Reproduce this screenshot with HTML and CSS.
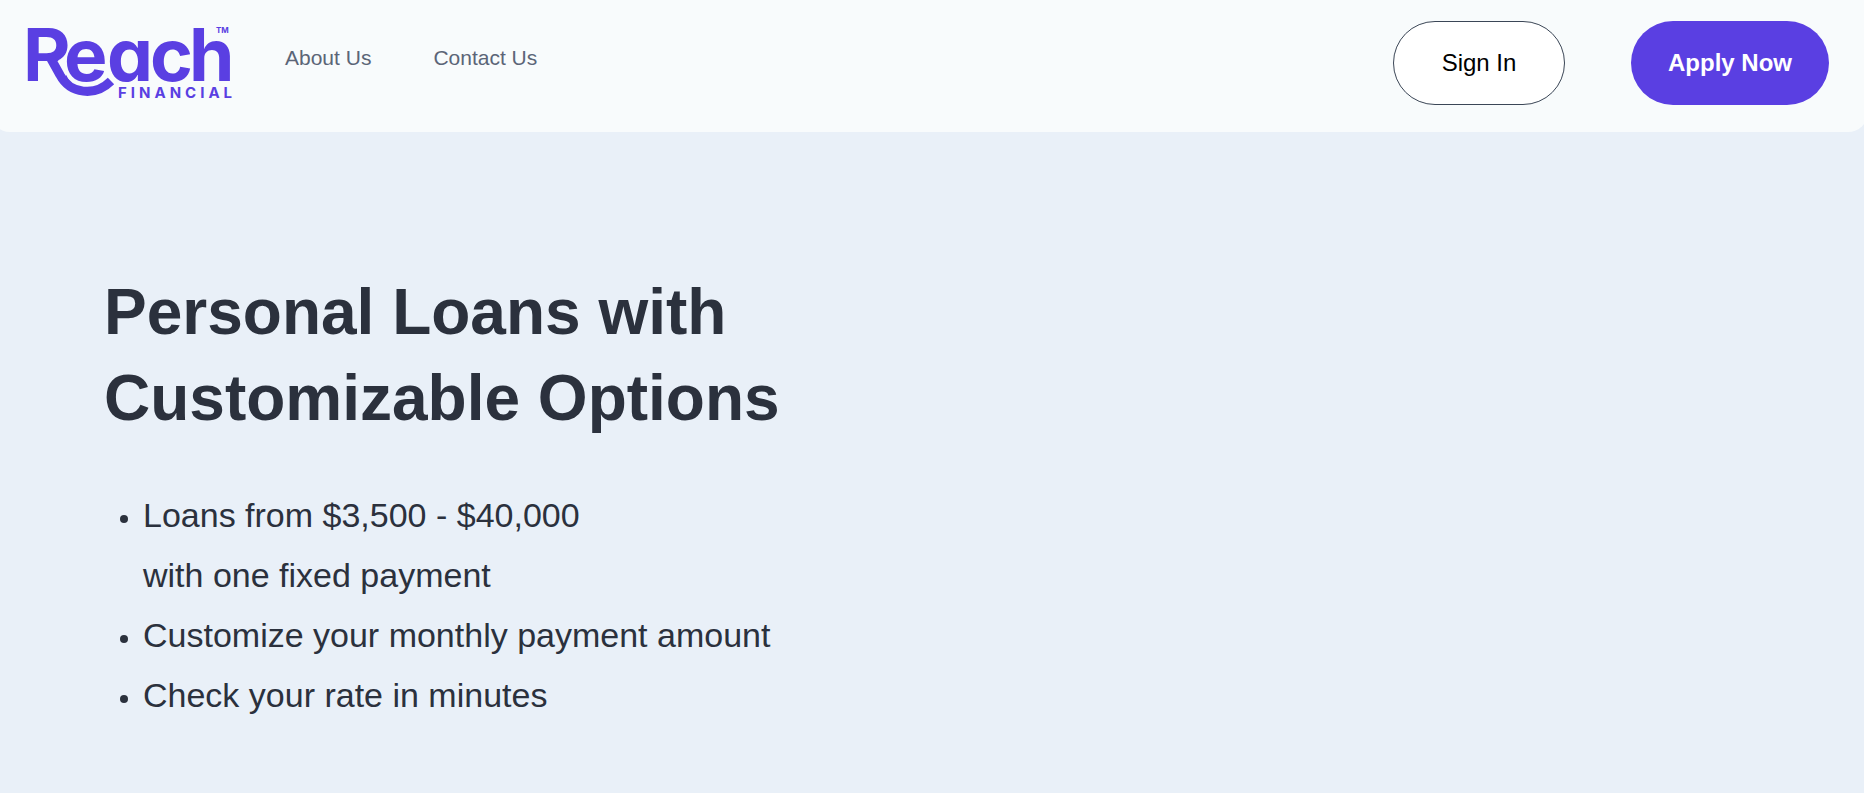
FILE: index.html
```
<!DOCTYPE html>
<html lang="en">
<head>
    <meta charset="UTF-8">
    <meta name="viewport" content="width=device-width, initial-scale=1.0">
    <title>Reach Financial</title>
    <link rel="stylesheet" href="styles.css">
</head>
<body>
    <header class="header">
        <a class="logo" href="#" aria-label="Reach Financial">
            <svg width="204" height="72" viewBox="0 0 204 72">
                <!-- the leg of the R is replaced by the smile -->
                <clipPath id="noLeg">
                    <path d="M-10 -10H220V80H38V34H10V80H-10Z"/>
                </clipPath>
                <text class="logo-name" x="-5 36 79 122 161" y="54" clip-path="url(#noLeg)">Reach</text>
                <path class="logo-smile" d="M22 30L32 48C42 67 67 70 83 54"/>
                <text class="logo-sub" x="90" y="71">FINANCIAL</text>
                <text class="logo-tm" x="188" y="6">TM</text>
            </svg>
        </a>
        <nav class="nav">
            <a href="#">About Us</a>
            <a href="#">Contact Us</a>
        </nav>
        <div class="actions">
            <button type="button" class="btn sign-in">Sign In</button>
            <button type="button" class="btn apply">Apply Now</button>
        </div>
    </header>

    <main class="hero">
        <h1>Personal Loans with<br>Customizable Options</h1>
        <ul>
            <li>Loans from $3,500 - $40,000<br>with one fixed payment</li>
            <li>Customize your monthly payment amount</li>
            <li>Check your rate in minutes</li>
        </ul>
    </main>
</body>
</html>
```
FILE: styles.css
```
body {
    margin: 0;
    min-height: 100vh;
    overflow-x: hidden;
    background-color: #e9f0f8;
    color: #2b313d;
    font-family: "Liberation Sans", Arial, sans-serif;
}

.header {
    display: flex;
    align-items: flex-start;
    margin: 0 -4px 0 -10px;
    padding: 21px 39px 27px 38px;
    background-color: #f8fbfc;
    border-radius: 0 0 20px 20px;
}

.logo {
    margin-top: 6px;
    line-height: 0;
}

.logo svg {
    overflow: visible;
    fill: #5a3fe2;
}

.logo-name {
    font: 700 73px Inter, sans-serif;
    font-feature-settings: "cv11";
}

.logo-sub {
    font: 700 15px Inter, sans-serif;
    letter-spacing: 4px;
}

.logo-tm {
    font: 700 8px Inter, sans-serif;
}

.logo-smile {
    fill: none;
    stroke: #5a3fe2;
    stroke-width: 9;
}

.nav {
    display: flex;
    gap: 62px;
    margin: 24px 0 0 53px;
}

.nav a {
    color: #5b6577;
    font-size: 21px;
    line-height: 26px;
    text-decoration: none;
}

.actions {
    display: flex;
    gap: 66px;
    margin-left: auto;
}

.btn {
    box-sizing: border-box;
    height: 84px;
    border-radius: 42px;
    font-family: inherit;
    font-size: 24px;
    cursor: pointer;
}

.sign-in {
    width: 172px;
    border: 1px solid #3b4656;
    background-color: #fff;
    color: #000;
}

.apply {
    width: 198px;
    border: none;
    background-color: #5a3fe2;
    color: #fff;
    font-weight: 700;
}

.hero {
    padding: 137px 104px 40px;
}

.hero h1 {
    margin: 0 0 44px;
    font-size: 64px;
    line-height: 86px;
}

.hero ul {
    margin: 0;
    padding-left: 39px;
    font-size: 34px;
    line-height: 60px;
}

.hero li::marker {
    font-size: 26px;
}
```
